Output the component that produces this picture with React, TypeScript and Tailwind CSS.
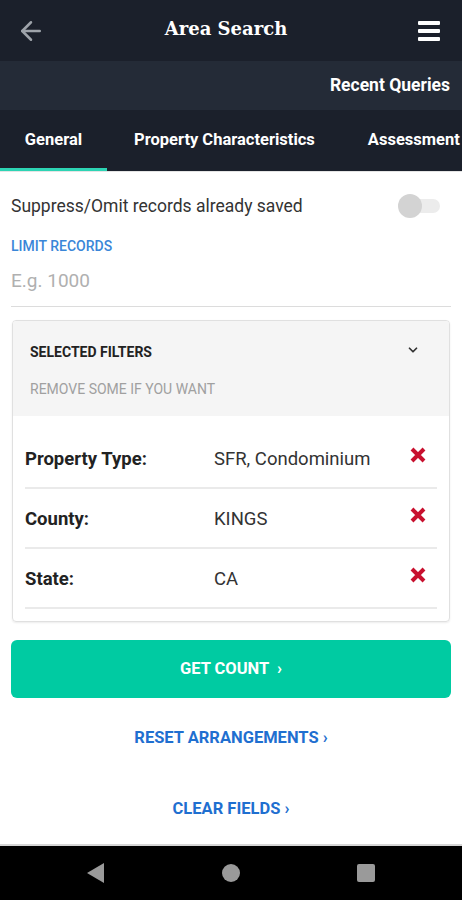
import { ArrowLeft, ChevronDown } from 'lucide-react'

const filters = [
  { label: 'Property Type:', value: 'SFR, Condominium' },
  { label: 'County:', value: 'KINGS' },
  { label: 'State:', value: 'CA' },
]

function RedX() {
  return (
    <svg width="18" height="18" viewBox="0 0 18 18">
      <path d="M3 3 L15 15 M15 3 L3 15" stroke="#c8102e" strokeWidth="4" strokeLinecap="butt" />
    </svg>
  )
}

export default function App() {
  return (
    <div className="w-[462px] h-[900px] flex flex-col bg-white overflow-hidden" style={{ fontFamily: 'Roboto, "Liberation Sans", sans-serif' }}>
      {/* top bar */}
      <div className="h-[61px] bg-[#1b202b] flex items-center justify-between px-4 shrink-0">
        <ArrowLeft className="text-[#9ea3aa] w-[30px] h-[30px]" strokeWidth={2} />
        <div className="text-white text-[18px] font-bold -mt-[4px] -ml-[8px]" style={{ fontFamily: '"DejaVu Serif", serif' }}>Area Search</div>
        <div className="w-[30px] flex flex-col gap-[4px] items-center mr-[2px]">
          <div className="w-[22px] h-[4px] bg-white rounded-[1px]" />
          <div className="w-[22px] h-[4px] bg-white rounded-[1px]" />
          <div className="w-[22px] h-[4px] bg-white rounded-[1px]" />
        </div>
      </div>

      {/* recent queries */}
      <div className="h-[49px] bg-[#242b37] flex items-center justify-end pr-[12px] shrink-0">
        <span className="text-white font-bold text-[17.5px]">Recent Queries</span>
      </div>

      {/* tabs */}
      <div className="h-[61px] bg-[#1b202b] flex shrink-0 relative">
        <div className="w-[107px] flex items-center justify-center text-white font-bold text-[16.5px] border-b-[3px] border-[#2dd4b4] pt-[3px]">General</div>
        <div className="flex items-center pl-[27px] text-white font-bold text-[16.5px] whitespace-nowrap">Property Characteristics</div>
        <div className="flex items-center pl-[53px] text-white font-bold text-[16.5px] whitespace-nowrap">Assessment</div>
      </div>
      <div className="h-[1px] bg-[#e4e4e4] shrink-0" />

      {/* content */}
      <div className="flex-1 flex flex-col px-[11px]">
        <div className="flex items-center justify-between h-[68px]">
          <span className="text-[#333] text-[17.5px]">Suppress/Omit records already saved</span>
          <div className="relative w-[42px] h-[24px] mr-[11px] flex items-center">
            <div className="w-[34px] h-[14px] rounded-full bg-[#ececec] ml-[8px]" />
            <div className="absolute left-0 top-0 w-[24px] h-[24px] rounded-full bg-[#d3d3d3]" />
          </div>
        </div>
        <div className="text-[#3a86d8] text-[14px] font-medium -mt-[4px]">LIMIT RECORDS</div>
        <div className="h-[50px] flex items-center border-b border-[#dcdcdc]">
          <span className="text-[#b0b0b0] text-[19px]">E.g. 1000</span>
        </div>

        {/* selected filters card */}
        <div className="mt-[13px] mx-[1px] border border-[#e0e0e0] rounded-[4px] shadow-[0_1px_2px_rgba(0,0,0,0.08)] overflow-hidden">
          <div className="bg-[#f5f5f5] h-[95px] px-[17px] pt-[21px]">
            <div className="flex items-center justify-between">
              <span className="text-[#222] text-[14px] font-bold">SELECTED FILTERS</span>
              <ChevronDown className="w-[14px] h-[14px] text-[#333] mr-[12px] -mt-[6px]" strokeWidth={3} />
            </div>
            <div className="text-[#a0a0a0] text-[14px] mt-[16px]">REMOVE SOME IF YOU WANT</div>
          </div>
          <div className="px-[12px] pt-[13px] pb-[12px]">
            {filters.map((f) => (
              <div key={f.label} className="h-[60px] flex items-center border-b-2 border-[#eaeaea]">
                <span className="w-[189px] text-[#222] font-bold text-[18.5px] mt-[3px]">{f.label}</span>
                <span className="flex-1 text-[#333] text-[18.5px] mt-[3px]">{f.value}</span>
                <div className="mr-[10px] -mt-[6px]"><RedX /></div>
              </div>
            ))}
          </div>
        </div>

        <button className="mt-[18px] h-[58px] rounded-[6px] bg-[#00cba2] text-white font-bold text-[16.5px]">GET COUNT &nbsp;›</button>
        <div className="h-[80px] flex items-center justify-center text-[#1f6fd0] font-bold text-[16.5px]">RESET ARRANGEMENTS ›</div>
        <div className="h-[62px] flex items-center justify-center text-[#1f6fd0] font-bold text-[16.5px]">CLEAR FIELDS ›</div>
      </div>

      {/* android nav */}
      <div className="h-[2px] bg-[#d6d6d6] shrink-0" />
      <div className="h-[54px] bg-black flex items-center justify-center gap-[117px] shrink-0">
        <svg width="18" height="20" viewBox="0 0 18 20"><path d="M17 0 L17 20 L0 10 Z" fill="#9a9a9a" /></svg>
        <div className="w-[18px] h-[18px] rounded-full bg-[#9a9a9a]" />
        <div className="w-[18px] h-[18px] rounded-[2px] bg-[#9a9a9a]" />
      </div>
    </div>
  )
}
